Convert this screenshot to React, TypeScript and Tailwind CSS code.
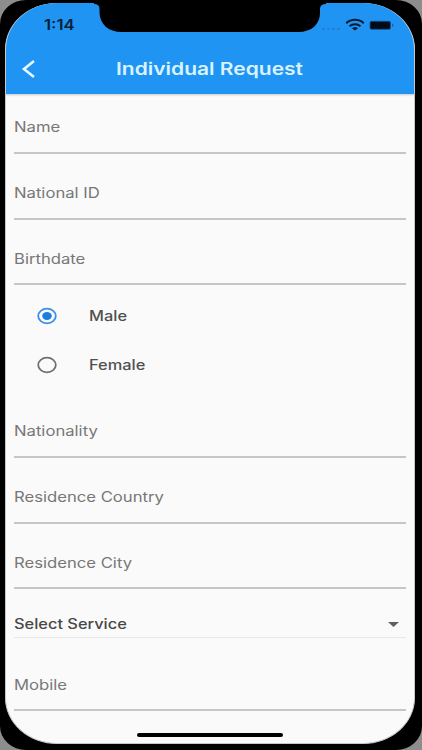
import { useState } from "react";
import clsx from "clsx";

const GENDERS = ["Male", "Female"];

function Field({ label, className }: { label: string; className?: string }) {
  return (
    <label className={clsx("flex shrink-0 items-end border-b-2 border-[#c6c6c6]", className)}>
      <span className="origin-left scale-x-[1.19] text-[14px] leading-5 whitespace-nowrap text-[#777]">{label}</span>
    </label>
  );
}

function StatusIcons() {
  return (
    <svg width="76" height="16" viewBox="0 0 76 16" aria-hidden="true">
      <g fill="#1c80d6">
        <rect x="2" y="11" width="3" height="1.6" />
        <rect x="7" y="11" width="3" height="1.6" />
        <rect x="12" y="11" width="3" height="1.6" />
        <rect x="17" y="11" width="3" height="1.6" />
      </g>
      <g fill="none" stroke="#061c33" strokeWidth="2">
        <path d="M26.2 6.3C31 1.7 39 1.7 43.8 6.3" />
        <path d="M29.5 9.3C32.5 6.5 37.5 6.5 40.5 9.3" />
      </g>
      <path d="M32 11.2C34 9.7 36 9.7 38 11.2L35 13.5Z" fill="#061c33" />
      <rect x="50" y="4.3" width="20.5" height="8" rx="1.5" fill="#010b17" stroke="#0e548f" strokeWidth="0.8" />
      <path d="M72.2 6.8C73.8 7.2 73.8 9.4 72.2 9.8Z" fill="#0e548f" />
    </svg>
  );
}

export default function App() {
  const [gender, setGender] = useState("Male");

  return (
    <div className="h-[750px] w-[422px] overflow-hidden bg-[#8d8d8d] font-['Inter','Liberation_Sans',sans-serif]">
      <div className="h-full w-full rounded-[26px/24px] bg-black pt-[3px] pl-[5px]">
        <main className="relative flex h-[741px] w-[410px] flex-col overflow-hidden rounded-[52px/46px] border-x border-b border-[#c8c8c8] bg-[#fafafa]">
          <header className="-mx-px flex h-[91px] shrink-0 flex-col bg-[#2094f3] shadow-[0_1px_2px_rgba(0,0,0,0.2)]">
            <div className="flex h-[44px] items-center justify-between pr-[19px] pl-[39px]">
              <span className="origin-left scale-x-[1.2] text-[14px] leading-5 font-semibold text-[#07213b]">1:14</span>
              <StatusIcons />
            </div>
            <div className="flex h-[44px] items-center">
              <button type="button" aria-label="Back" className="ml-[15px] -mt-px">
                <svg width="18" height="20" viewBox="0 0 18 20" fill="none" stroke="#e9f9ff" strokeWidth="2.6">
                  <path d="M14 2L4 10L14 18" />
                </svg>
              </button>
              <h1 className="ml-[78px] origin-left scale-x-[1.235] text-[17px] leading-6 font-semibold whitespace-nowrap text-[#d8f3ff]">
                Individual Request
              </h1>
            </div>
          </header>

          <svg className="absolute -top-px left-[88px]" width="232" height="31" viewBox="94 2 232 31" aria-hidden="true">
            <path d="M94 2V4Q99.5 4 99.5 9V13C100 24 108 32 122 32H298C312 32 320 24 320 13V9Q320 4 326 4V2Z" />
          </svg>

          <form className="flex flex-col px-2">
            <Field label="Name" className="h-[60px] pb-[15px]" />
            <Field label="National ID" className="h-[66px] pb-[15px]" />
            <Field label="Birthdate" className="h-[65px] pb-[14px]" />

            <div className="pt-[6px]">
              {GENDERS.map((g) => (
                <label key={g} className="flex h-[49px] items-center pl-[23px]">
                  <input
                    type="radio"
                    name="gender"
                    className="sr-only"
                    checked={gender === g}
                    onChange={() => setGender(g)}
                  />
                  <svg width="20" height="18" viewBox="0 0 20 18" fill="none" aria-hidden="true">
                    <ellipse
                      cx="10"
                      cy="9"
                      rx="8.8"
                      ry="7.3"
                      strokeWidth="1.8"
                      stroke={gender === g ? "#3a8ee6" : "#707070"}
                    />
                    {gender === g && <ellipse cx="10" cy="9" rx="4.8" ry="4" fill="#1c7de0" />}
                  </svg>
                  <span className="ml-[32px] origin-left scale-x-[1.17] text-[14px] leading-5 font-medium text-[#505050]">
                    {g}
                  </span>
                </label>
              ))}
            </div>

            <Field label="Nationality" className="h-[69px] pb-[15px]" />
            <Field label="Residence Country" className="h-[66px] pb-[15px]" />
            <Field label="Residence City" className="h-[65px] pb-[14px]" />

            <button
              type="button"
              className="flex h-[49px] items-end justify-between border-b border-[#e8e8e8] pr-[7px] pb-[3px] text-left"
            >
              <span className="origin-left scale-x-[1.17] text-[14px] leading-5 font-medium whitespace-nowrap text-[#484848]">
                Select Service
              </span>
              <svg className="mb-[7px]" width="11" height="5" viewBox="0 0 11 5" fill="#606060" aria-hidden="true">
                <path d="M0 0H11L5.5 5Z" />
              </svg>
            </button>

            <Field label="Mobile" className="h-[73px] pb-[14px]" />
          </form>

          <div className="absolute bottom-[6px] left-[131px] h-[4px] w-[146px] rounded-full bg-black" />
        </main>
      </div>
    </div>
  );
}
